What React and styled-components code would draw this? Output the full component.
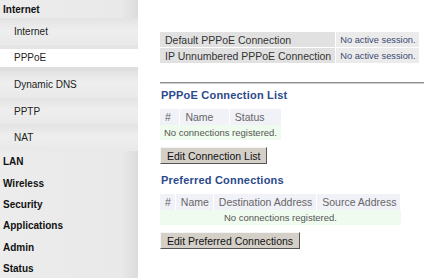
import React from "react";
import styled, { createGlobalStyle } from "styled-components";

const Global = createGlobalStyle`
  html, body { margin: 0; padding: 0; background: #fff; }
  body { font-family: "Liberation Sans", Arial, sans-serif; }
`;

const Page = styled.div`
  display: flex;
  width: 424px;
  height: 278px;
  overflow: hidden;
`;

const Side = styled.nav`
  width: 138px;
  flex-shrink: 0;
  background: linear-gradient(to right, #ececec 0%, #e9e9e9 88%, #dcdcdc 100%);
  display: flex;
  flex-direction: column;
`;

const Group = styled.div`
  font-size: 10px;
  font-weight: bold;
  color: #111;
  height: ${(p) => (p.first ? "18px" : "21.4px")};
  display: flex;
  align-items: center;
  padding-left: 3px;
  flex-shrink: 0;
`;

const Sub = styled.div`
  font-size: 10px;
  color: #222;
  height: 26.6px;
  flex-shrink: 0;
  padding-left: 14px;
  box-sizing: border-box;
  background: ${(p) =>
    p.active
      ? "linear-gradient(to bottom, #e4e4e4 0, #e4e4e4 4px, #fff 4px, #fff 22px, #dedede 22px)"
      : "linear-gradient(to bottom, #e3e3e3, #eeeeee 45%, #e9e9e9)"};
  display: flex;
  align-items: center;
`;

const Main = styled.main`
  flex: 1;
  padding-top: 32px;
  padding-left: 22px;
`;

const InfoTable = styled.table`
  border-collapse: collapse;
  margin-bottom: 18px;
  font-size: 10.5px;
  white-space: nowrap;
`;

const Label = styled.td`
  background: #e1e1e1;
  color: #333;
  padding: 0 4px 0 5px;
  height: 15px;
  border-bottom: 1px solid #fff;
  border-right: 1px solid #fff;
`;

const Value = styled.td`
  background: #ebebeb;
  color: #3b4a75;
  font-size: 9.3px;
  padding: 0 3px 0 4px;
  height: 15px;
  border-bottom: 1px solid #fff;
`;

const Rule = styled.hr`
  margin: 0;
  border: none;
  border-top: 1px solid #8c8c8c;
  border-bottom: 1px solid #cfcfcf;
`;

const Heading = styled.h3`
  margin: ${(p) => (p.first ? "5px" : "10px")} 0 7px 1px;
  font-size: 11px;
  line-height: 13px;
  font-weight: bold;
  color: #2b4a8b;
  letter-spacing: 0.2px;
`;

const ListTable = styled.table`
  border-collapse: collapse;
  font-size: 10.5px;
  color: #666;
  white-space: nowrap;
`;

const Th = styled.th`
  background: #f1f1f8;
  font-weight: normal;
  text-align: left;
  padding: 0 4px 0 5px;
  height: 16px;
  border-right: 1px solid #fff;
`;

const Empty = styled.td`
  background: #effbee;
  color: #555;
  font-size: 9.5px;
  height: 15px;
  padding: 0 4px;
  text-align: ${(p) => (p.center ? "center" : "left")};
`;

const Button = styled.button`
  display: block;
  margin: 7px 0 0 0;
  font-family: "Liberation Sans", Arial, sans-serif;
  font-size: 10.5px;
  color: #111;
  background: #d4d0c8;
  border: 1px solid;
  border-color: #f4f4f4 #555 #555 #f4f4f4;
  padding: 0 6px;
  height: 17px;
  line-height: 14px;
`;

export default function App() {
  return (
    <Page>
      <Global />
      <Side>
        <Group first>Internet</Group>
        <Sub>Internet</Sub>
        <Sub active>PPPoE</Sub>
        <Sub>Dynamic DNS</Sub>
        <Sub>PPTP</Sub>
        <Sub>NAT</Sub>
        <Group>LAN</Group>
        <Group>Wireless</Group>
        <Group>Security</Group>
        <Group>Applications</Group>
        <Group>Admin</Group>
        <Group>Status</Group>
      </Side>
      <Main>
        <InfoTable>
          <tbody>
            <tr>
              <Label>Default PPPoE Connection</Label>
              <Value>No active session.</Value>
            </tr>
            <tr>
              <Label>IP Unnumbered PPPoE Connection</Label>
              <Value>No active session.</Value>
            </tr>
          </tbody>
        </InfoTable>
        <Rule />
        <Heading first>PPPoE Connection List</Heading>
        <ListTable>
          <tbody>
            <tr>
              <Th>#</Th>
              <Th>Name</Th>
              <Th>Status</Th>
            </tr>
            <tr>
              <Empty colSpan={3}>No connections registered.</Empty>
            </tr>
          </tbody>
        </ListTable>
        <Button>Edit Connection List</Button>
        <Heading>Preferred Connections</Heading>
        <ListTable>
          <tbody>
            <tr>
              <Th>#</Th>
              <Th>Name</Th>
              <Th>Destination Address</Th>
              <Th>Source Address</Th>
            </tr>
            <tr>
              <Empty colSpan={4} center>
                No connections registered.
              </Empty>
            </tr>
          </tbody>
        </ListTable>
        <Button>Edit Preferred Connections</Button>
      </Main>
    </Page>
  );
}
